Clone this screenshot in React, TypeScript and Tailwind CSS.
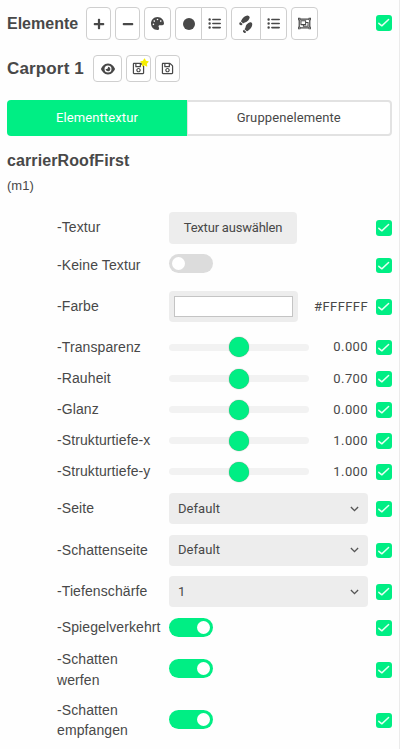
import type { ReactNode } from "react"
import { FaPalette, FaCircle, FaListUl, FaEye, FaShoePrints } from "react-icons/fa6"
import { FaPlus, FaMinus, FaRegObjectGroup, FaRegSave, FaStar } from "react-icons/fa"

function Check() {
  return (
    <span className="block w-[15.5px] h-[15.5px] shrink-0 rounded-[3px] bg-[#00ee84]">
      <svg viewBox="0 0 16 16" className="w-full h-full" fill="none" stroke="#e6fff3" strokeWidth="1.5" strokeLinecap="round" strokeLinejoin="round">
        <path d="M2.9 8.6 L6 11.2 L13 4.6" />
      </svg>
    </span>
  )
}

function IconButton({ className, children }: { className: string; children: ReactNode }) {
  return (
    <button className={`flex items-center justify-center border border-[#cfcfcf] bg-white ${className}`}>
      {children}
    </button>
  )
}

function Toggle({ on = false }: { on?: boolean }) {
  return (
    <span className={`flex items-center w-11 h-[19px] rounded-full px-[3px] ${on ? "justify-end bg-[#00ee84]" : "bg-[#dcdcdc]"}`}>
      <span className="block w-[13px] h-[13px] rounded-full bg-white" />
    </span>
  )
}

function Slider() {
  return (
    <span className="relative flex items-center w-[140px] h-5">
      <span className="block w-full h-[7px] rounded-full bg-[#f2f2f2]" />
      <span className="absolute left-[60px] top-0 w-5 h-5 rounded-full bg-[#00ee84] shadow-[0_0_1px_#55775f]" />
    </span>
  )
}

function Select({ value }: { value: string }) {
  return (
    <span className="flex items-center justify-between w-[199px] h-[31px] rounded-[4px] bg-[#ededed] pl-[9px] pr-[9px] font-[Roboto,sans-serif] text-[13px] tracking-[0.05px]">
      {value}
      <svg viewBox="0 0 10 6" className="w-[9px] h-[6px]" fill="none" stroke="#555" strokeWidth="1.5">
        <path d="M1 0.8 L5 4.8 L9 0.8" />
      </svg>
    </span>
  )
}

function Row({ label, height, value, children }: { label: string; height: string; value?: string; children: ReactNode }) {
  return (
    <div className={`flex items-center ${height}`}>
      <div className="w-[112px] shrink-0 pr-2 text-[14px] leading-[20.5px] tracking-[0.1px]">
        <span className="whitespace-pre-line">{label}</span>
      </div>
      <div className="flex-1 flex items-center justify-between">
        {children}
        {value && <span className="font-[Roboto,sans-serif] text-[13px] tracking-[0.4px]">{value}</span>}
      </div>
      <div className="ml-2 pt-px">
        <Check />
      </div>
    </div>
  )
}

const sliders = [
  { label: "-Transparenz", value: "0.000", height: "h-[32px]" },
  { label: "-Rauheit", value: "0.700", height: "h-[31px]" },
  { label: "-Glanz", value: "0.000", height: "h-[31px]" },
  { label: "-Strukturtiefe-x", value: "1.000", height: "h-[31px]" },
  { label: "-Strukturtiefe-y", value: "1.000", height: "h-[31px]" },
]

export default function App() {
  return (
    <div className="w-[400px] h-[749px] overflow-hidden bg-[#fefefe] border-r border-[#ebebeb] pl-[7px] pr-[7.5px] pt-[7px] text-[#484848] font-['Liberation_Sans',Arial,sans-serif]">
      <div className="flex items-center h-[33px]">
        <h1 className="w-[79px] text-[16px] font-bold">Elemente</h1>
        <div className="flex items-center gap-1">
          <IconButton className="w-[25px] h-[33px] rounded-[4px]">
            <FaPlus size={12} />
          </IconButton>
          <IconButton className="w-[25px] h-[33px] rounded-[4px]">
            <FaMinus size={12} />
          </IconButton>
          <IconButton className="w-[27px] h-[33px] rounded-[4px]">
            <FaPalette size={13} />
          </IconButton>
          <div className="flex">
            <IconButton className="w-[27px] h-[33px] rounded-l-[4px]">
              <FaCircle size={12} />
            </IconButton>
            <IconButton className="w-[26px] h-[33px] rounded-r-[4px] -ml-px">
              <FaListUl size={13} />
            </IconButton>
          </div>
          <div className="flex">
            <IconButton className="w-[30px] h-[33px] rounded-l-[4px]">
              <FaShoePrints size={16} className="-rotate-[47deg]" />
            </IconButton>
            <IconButton className="w-[27px] h-[33px] rounded-r-[4px] -ml-px">
              <FaListUl size={13} />
            </IconButton>
          </div>
          <IconButton className="w-[27px] h-[33px] rounded-[4px]">
            <FaRegObjectGroup size={13} />
          </IconButton>
        </div>
        <div className="ml-auto pb-px">
          <Check />
        </div>
      </div>

      <div className="flex items-center mt-[15px] h-[27px]">
        <h2 className="w-[86px] text-[17px] tracking-[0.15px] font-bold">Carport 1</h2>
        <div className="flex gap-1">
          <IconButton className="w-[29px] h-[27px] rounded-[4px]">
            <FaEye size={14} />
          </IconButton>
          <IconButton className="relative w-[25px] h-[27px] rounded-[4px]">
            <FaRegSave size={13} />
            <FaStar size={9} className="absolute right-[1px] top-[2px] text-[#f5ee00]" />
          </IconButton>
          <IconButton className="w-[25px] h-[27px] rounded-[4px]">
            <FaRegSave size={13} />
          </IconButton>
        </div>
      </div>

      <div className="flex mt-[18px] h-9 font-[Roboto,sans-serif] text-[13px] tracking-[0.1px]">
        <button className="w-[180px] rounded-l-[4px] bg-[#00ee84] text-white">Elementtextur</button>
        <button className="flex-1 rounded-r-[4px] border-2 border-l border-[#e2e2e2] bg-white">Gruppenelemente</button>
      </div>

      <h3 className="mt-[15px] text-[16px] leading-5 tracking-[0.1px] font-bold">carrierRoofFirst</h3>
      <p className="mt-[5px] text-[13px] leading-5">(m1)</p>

      <div className="mt-[11px] pl-[50px]">
        <Row label="-Textur" height="h-[41px]">
          <button className="w-32 h-8 rounded-[4px] bg-[#ededed] font-[Roboto,sans-serif] text-[13px] tracking-[-0.2px]">Textur auswählen</button>
        </Row>
        <Row label="-Keine Textur" height="h-[34px]">
          <div className="pb-1">
            <Toggle />
          </div>
        </Row>
        <Row label="-Farbe" height="h-[49px]" value="#FFFFFF">
          <span className="block w-[129px] h-[31px] rounded-[4px] bg-[#ededed] p-[5px]">
            <span className="block h-full border border-[#c4c4c4] bg-white" />
          </span>
        </Row>
        {sliders.map((s) => (
          <Row key={s.label} label={s.label} height={s.height} value={s.value}>
            <Slider />
          </Row>
        ))}
        <Row label="-Seite" height="h-[43px]">
          <Select value="Default" />
        </Row>
        <Row label="-Schattenseite" height="h-[40px]">
          <Select value="Default" />
        </Row>
        <Row label="-Tiefenschärfe" height="h-[43px]">
          <Select value="1" />
        </Row>
        <Row label="-Spiegelverkehrt" height="h-[29px]">
          <div className="pb-px">
            <Toggle on />
          </div>
        </Row>
        <Row label={"-Schatten\nwerfen"} height="h-[55px]">
          <div className="pb-0.5">
            <Toggle on />
          </div>
        </Row>
        <Row label={"-Schatten\nempfangen"} height="h-[46px]">
          <div className="pb-px">
            <Toggle on />
          </div>
        </Row>
      </div>
    </div>
  )
}
